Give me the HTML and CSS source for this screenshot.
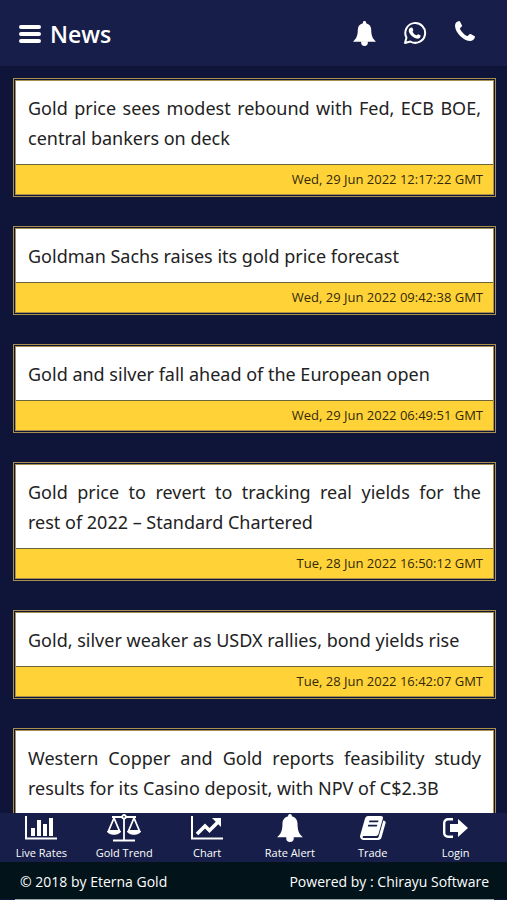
FILE: index.html
```html
<!DOCTYPE html>
<html lang="en">
  <head>
    <meta charset="UTF-8">
    <meta name="viewport" content="width=device-width, initial-scale=1.0">
    <title>News</title>
    <link rel="stylesheet" href="styles.css">
  </head>
  <body>
    <svg class="sprite" aria-hidden="true">
      <symbol id="bell" viewBox="0 0 24 26">
        <path d="M12 0c1 0 1.700.7 1.700 1.600v.6c3.400.8 5.300 3.400 5.300 7 0 6 1.500 9.500 5 12.300H0c3.500-2.800 5-6.300 5-12.300 0-3.600 1.900-6.200 5.300-7v-.6C10.300.7 11 0 12 0z"/>
        <path d="M8.500 21h7v1.500a3.500 3.500 0 0 1-7 0z"/>
      </symbol>
    </svg>

    <header class="topbar">
      <button class="menu-button" aria-label="Menu">
        <svg width="22" height="18" viewBox="0 0 22 18"><path d="M2 2h18M2 9h18M2 16h18" stroke="currentColor" stroke-width="4" stroke-linecap="round"/></svg>
      </button>
      <h1>News</h1>
      <nav class="actions">
        <a href="#alerts" aria-label="Notifications"><svg width="23" height="25"><use href="#bell"/></svg></a>
        <a href="#whatsapp" aria-label="WhatsApp">
          <svg width="23" height="25" viewBox="1 0 23 25"><path d="M2 22l1.500-5.400A9.900 9.900 0 1 1 7.300 20.500z" fill="none" stroke="currentColor" stroke-width="2" stroke-linejoin="round"/><path d="M8.600 6.500c.5 0 .7 0 .9.500l.8 1.900c.2.500-.9 1.500-.7 1.900.9 1.700 2.100 2.800 3.800 3.500.5.200 1.300-1.300 1.800-1.100l2.100 1c.6.300.1 2.100-.6 2.700-1.300 1-2.900.9-4.800.1-2.400-1-4.600-3.100-5.700-5.500-.8-1.800-.4-5 2.400-5z"/></svg>
        </a>
        <a href="#call" aria-label="Call">
          <svg width="20" height="24" viewBox="0 0 20 24"><path d="M0 4.400C0 2 2.200.2 4.200 0c.5 0 .7.400.9.800l1.800 3.500c.7 1.400-1.900 2.300-1.900 3.400 0 1.600 5.600 7.300 7.300 7.300 1.100 0 2-2.600 3.400-1.900l3.500 1.800c.4.200.8.400.8.900-.2 2-2 4.200-4.400 4.200C8.600 20 0 11.400 0 4.400z"/></svg>
        </a>
      </nav>
    </header>

    <main class="news-list">
      <article class="news-card">
        <h2>Gold price sees modest rebound with Fed, ECB BOE, central bankers on deck</h2>
        <time>Wed, 29 Jun 2022 12:17:22 GMT</time>
      </article>
      <article class="news-card">
        <h2>Goldman Sachs raises its gold price forecast</h2>
        <time>Wed, 29 Jun 2022 09:42:38 GMT</time>
      </article>
      <article class="news-card">
        <h2>Gold and silver fall ahead of the European open</h2>
        <time>Wed, 29 Jun 2022 06:49:51 GMT</time>
      </article>
      <article class="news-card">
        <h2>Gold price to revert to tracking real yields for the rest&nbsp;of 2022 – Standard Chartered</h2>
        <time>Tue, 28 Jun 2022 16:50:12 GMT</time>
      </article>
      <article class="news-card">
        <h2>Gold, silver weaker as USDX rallies, bond yields rise</h2>
        <time>Tue, 28 Jun 2022 16:42:07 GMT</time>
      </article>
      <article class="news-card">
        <h2>Western Copper and Gold reports feasibility study results for its Casino deposit, with NPV of C$2.3B</h2>
      </article>
    </main>

    <div class="bottom">
      <nav class="tabs">
        <a href="#rates">
          <svg width="32" height="24" viewBox="0 0 32 24"><path d="M1 0v22.500h31" fill="none" stroke="currentColor" stroke-width="2"/><path d="M6 12h4v8H6zM12 4h4v16h-4zM18 8h4v12h-4zM24 2h4v18h-4z"/></svg>
          Live Rates
        </a>
        <a href="#trend">
          <svg width="34" height="28" viewBox="0 0 34 28"><g fill="none" stroke="currentColor" stroke-width="1.800"><circle cx="17" cy="2.800" r="1.800"/><path d="M5 3h10M19 3h10M17 4.500v22M6 26.500h22M7 4L1.500 17h11zM27 4l-5.500 13h11z"/></g><path d="M0 17h14c-1 5-13 5-14 0zM20 17h14c-1 5-13 5-14 0z"/></svg>
          Gold Trend
        </a>
        <a href="#chart">
          <svg width="32" height="24" viewBox="0 0 32 24"><path d="M1 0v22.500h31" fill="none" stroke="currentColor" stroke-width="2"/><path d="M6 18l8-8 4.500 4.500L27 6" fill="none" stroke="currentColor" stroke-width="3.600"/><path d="M21 2h9v9z"/></svg>
          Chart
        </a>
        <a href="#alert">
          <svg width="26" height="28"><use href="#bell"/></svg>
          Rate Alert
        </a>
        <a href="#trade">
          <svg width="26" height="24" viewBox="0 0 26 24"><path fill-rule="evenodd" d="M8 0h13c1.500 0 2.300 1.200 1.900 2.500L18.500 18c-.4 1.300-1.300 2-2.600 2H4c-1.600 0-2 2-.3 2h13c1 0 1.700-.5 2-1.500L23.300 4.500c2 .3 2.700 1.200 2.300 2.600L21.500 21.500c-.4 1.500-1.700 2.500-3.200 2.500H4c-3 0-4.700-2.500-3.700-5L5 2.500C5.500.9 6.500 0 8 0zM9.500 4.500L9 6.300h9l.5-1.800zM8.300 8.800l-.5 1.800h9l.5-1.800z"/></svg>
          Trade
        </a>
        <a href="#login">
          <svg width="25" height="20" viewBox="0 0 25 20"><path d="M10 1.200H5A3.800 3.800 0 0 0 1.200 5v10A3.800 3.800 0 0 0 5 18.800h5" fill="none" stroke="currentColor" stroke-width="2.400"/><path d="M7 6h8V1l10 9-10 9v-5H7z"/></svg>
          Login
        </a>
      </nav>
      <footer class="footer">
        <span>© 2018 by Eterna Gold</span>
        <span>Powered by : Chirayu Software</span>
      </footer>
    </div>
  </body>
</html>
```
FILE: styles.css
```css
* {
  box-sizing: border-box;
}

body {
  margin: 0;
  height: 100vh;
  display: flex;
  flex-direction: column;
  font-family: 'Open Sans', 'Noto Sans', sans-serif;
  background-color: #0e1539;
  color: #fff;
}

svg {
  fill: currentColor;
}

a {
  color: inherit;
  text-decoration: none;
}

.sprite {
  display: none;
}

.topbar {
  flex: none;
  display: flex;
  align-items: center;
  height: 66px;
  padding: 0 32px 0 19px;
  background-color: #161e49;
}

.menu-button {
  display: flex;
  margin-top: 2px;
  padding: 0;
  border: none;
  background: none;
  color: inherit;
  cursor: pointer;
}

h1 {
  margin: 2px 0 0 9px;
  font-size: 23px;
  font-weight: 600;
}

.actions {
  display: flex;
  align-items: center;
  gap: 28px;
  margin-left: auto;
}

.actions a {
  display: flex;
}

.news-list {
  flex: 1;
  min-height: 0;
  overflow: hidden;
  padding: 12px 11px 0 13px;
}

.news-card {
  margin-bottom: 29px;
  border: 3px double #a88f4c;
}

.news-card h2 {
  margin: 0;
  padding: 12px 12px 11px;
  background-color: #fff;
  color: #222;
  font-family: 'Noto Sans', 'Open Sans', sans-serif;
  font-size: 18px;
  font-weight: 400;
  line-height: 30px;
  text-align: justify;
}

.news-card time {
  display: block;
  padding: 0 10px;
  border-top: 1px solid #6d6338;
  background-color: #ffd338;
  color: #33290a;
  font-size: 13px;
  line-height: 29px;
  text-align: right;
}

.bottom {
  flex: none;
}

/* edge of the list showing under the footer */
.bottom::after {
  content: '';
  display: block;
  height: 1px;
  margin: 0 13px 0 15px;
  background-color: #9aa5ad;
}

.tabs {
  display: grid;
  grid-template-columns: repeat(6, 1fr);
  height: 49px;
  padding-right: 10px;
  background-color: #161e49;
}

.tabs a {
  display: grid;
  grid-template-rows: 30px 18px;
  place-items: center;
  font-size: 11px;
  white-space: nowrap;
}

.footer {
  display: flex;
  align-items: center;
  justify-content: space-between;
  height: 37px;
  padding: 2px 18px 0 20px;
  background-color: #02131a;
  font-size: 14px;
}
```
